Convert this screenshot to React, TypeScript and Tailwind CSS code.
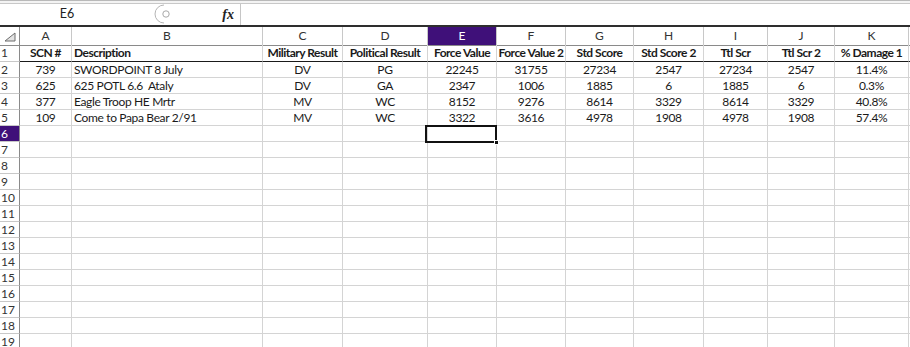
import React from 'react';

const cols = ['A', 'B', 'C', 'D', 'E', 'F', 'G', 'H', 'I', 'J', 'K'];

const headers = [
  'SCN #',
  'Description',
  'Military Result',
  'Political Result',
  'Force Value',
  'Force Value 2',
  'Std Score',
  'Std Score 2',
  'Ttl Scr',
  'Ttl Scr 2',
  '% Damage 1',
];

const rows: string[][] = [
  ['739', 'SWORDPOINT 8 July', 'DV', 'PG', '22245', '31755', '27234', '2547', '27234', '2547', '11.4%'],
  ['625', '625 POTL 6.6  Ataly', 'DV', 'GA', '2347', '1006', '1885', '6', '1885', '6', '0.3%'],
  ['377', 'Eagle Troop HE Mrtr', 'MV', 'WC', '8152', '9276', '8614', '3329', '8614', '3329', '40.8%'],
  ['109', 'Come to Papa Bear 2/91', 'MV', 'WC', '3322', '3616', '4978', '1908', '4978', '1908', '57.4%'],
];

const TOTAL_ROWS = 19;

const FormulaBar: React.FC = () => (
  <div className="h-[27px] flex flex-col">
    <div className="h-px bg-[#b9b9b9]" />
    <div className="h-[3px] bg-[#f3f3f3]" />
    <div className="h-px bg-[#c8c8c8]" />
    <div className="flex-1 flex items-stretch bg-white">
      <div className="w-[134px] flex items-center justify-center text-[12.5px] text-[#222]">E6</div>
      <div className="w-[40px] relative">
        <svg width="40" height="20" viewBox="0 0 40 20" className="absolute left-0 top-0">
          <path d="M30 1 A 9 9 0 0 0 30 19" fill="none" stroke="#b5b5b5" strokeWidth="1" />
          <circle cx="32" cy="10" r="3.2" fill="none" stroke="#a8a8a8" strokeWidth="1" />
        </svg>
      </div>
      <div className="w-[66px] flex items-center justify-end pr-[6px]">
        <span className="text-[14px] font-bold italic text-[#222]" style={{ fontFamily: '"Liberation Serif", serif' }}>
          fx
        </span>
      </div>
      <div className="w-px bg-[#c6c6c6]" />
      <div className="flex-1" />
    </div>
    <div className="h-[2px] bg-[#2e2e2e]" />
  </div>
);

export default function App() {
  const grid = 'grid grid-cols-[20px_52px_191px_80px_85px_69px_69px_68px_70px_64px_67px_74px_1fr]';
  const selRow = 6;
  const selCol = 4;

  return (
    <div className="w-[910px] h-[347px] overflow-hidden bg-white text-[12px] text-[#1a1a1a]" style={{ fontFamily: 'Lato, "Liberation Sans", sans-serif' }}>
      <FormulaBar />
      <div className="relative">
        {/* column headers */}
        <div className={`${grid} h-[18px]`}>
          <div className="border-r border-b border-r-[#8a8a8a] border-b-[#8a8a8a] relative">
            <svg width="12" height="10" viewBox="0 0 12 10" className="absolute left-[4px] top-[5px]">
              <path d="M1 9 L11 1 L11 9 Z" fill="#e3e3e3" stroke="#6d6d6d" strokeWidth="1" />
            </svg>
          </div>
          {cols.map((c, i) => (
            <div
              key={c}
              className={`flex items-center justify-center border-r border-b border-r-[#c8c8c8] border-b-[#8a8a8a] ${
                i === selCol ? 'bg-[#3f1079] text-white' : 'text-[#333]'
              }`}
            >
              {c}
            </div>
          ))}
          <div className="border-b border-b-[#8a8a8a]" />
        </div>

        {Array.from({ length: TOTAL_ROWS }, (_, r) => {
          const rowNum = r + 1;
          const data = rowNum === 1 ? headers : rows[rowNum - 2];
          const isHeader = rowNum === 1;
          return (
            <div key={rowNum} className={`${grid} ${isHeader ? 'h-[17px]' : 'h-[16px]'}`}>
              <div
                className={`flex items-center pl-px text-[12px] leading-none border-r border-b border-r-[#8a8a8a] border-b-[#c8c8c8] ${
                  rowNum === selRow ? 'bg-[#3f1079] text-white' : 'text-[#333]'
                }`}
              >
                {rowNum}
              </div>
              {cols.map((c, i) => (
                <div
                  key={c}
                  className={`flex items-center overflow-hidden whitespace-pre border-r border-b border-r-[#d4d4d4] ${
                    isHeader ? 'border-b-[#1a1a1a] font-bold tracking-[-0.5px]' : 'border-b-[#d4d4d4] tracking-[-0.35px]'
                  } ${i === 1 ? 'justify-start pl-[2px]' : 'justify-center'}`}
                >
                  {data ? data[i] : ''}
                </div>
              ))}
              <div className={`border-b ${isHeader ? 'border-b-[#1a1a1a]' : 'border-b-[#d4d4d4]'}`} />
            </div>
          );
        })}

        {/* active cell E6 */}
        <div className="absolute left-[425px] top-[98px] w-[72px] h-[18px] border-2 border-[#111] pointer-events-none">
          <div className="absolute right-[-4px] bottom-[-4px] w-[5px] h-[5px] bg-[#111] border border-white" />
        </div>
      </div>
    </div>
  );
}
